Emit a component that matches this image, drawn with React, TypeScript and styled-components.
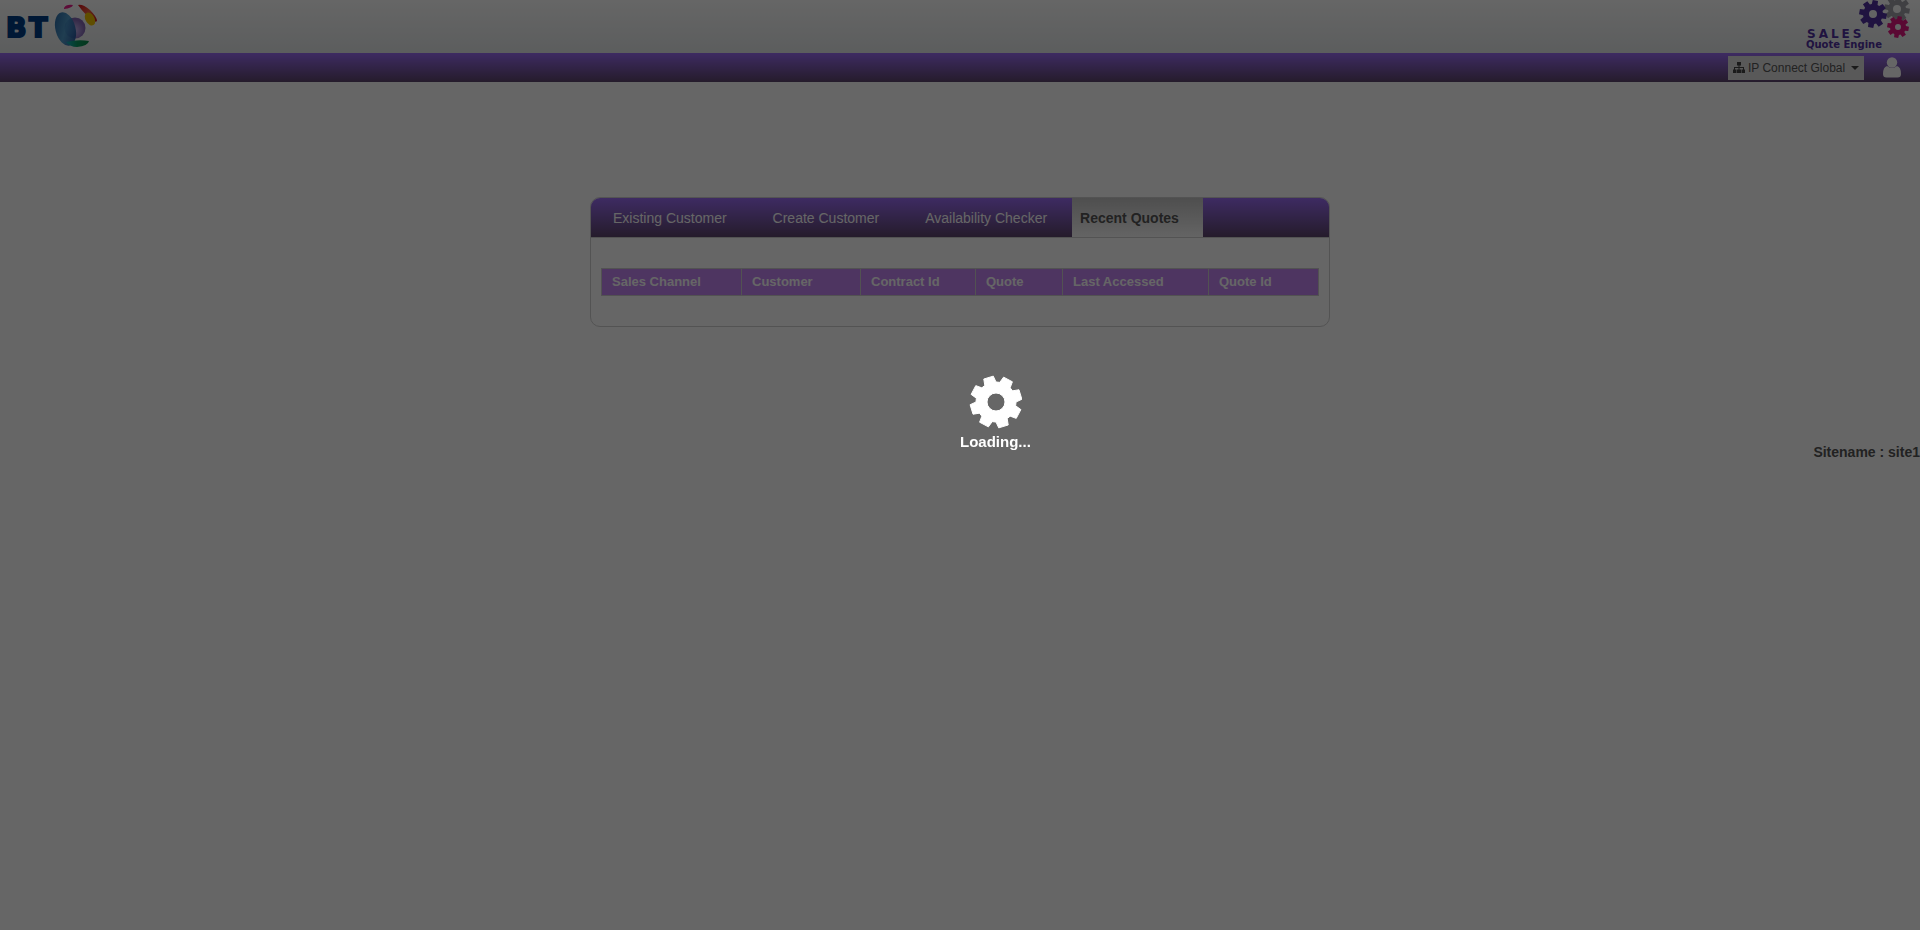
import React from "react";
import styled, { createGlobalStyle } from "styled-components";

const GlobalStyle = createGlobalStyle`
  body { margin: 0; background: #fff; font-family: "Liberation Sans", Arial, sans-serif; }
  * { box-sizing: border-box; }
`;

const purple = "linear-gradient(#9b6cf5, #5d466d)";

const Page = styled.div`
  min-height: 100vh;
`;
const Header = styled.header`
  display: flex;
  justify-content: space-between;
  height: 53px;
  padding: 0 8px 0 6px;
  background: linear-gradient(#ffffff, #e5e9ea);
`;
const NavBar = styled.nav`
  display: flex;
  align-items: center;
  justify-content: flex-end;
  gap: 19px;
  height: 29px;
  padding-right: 19px;
  background: ${purple};
`;
const ProductPicker = styled.label`
  display: flex;
  align-items: center;
  gap: 3px;
  height: 24px;
  padding: 0 5px;
  background: #dedede;
`;
const ProductSelect = styled.select`
  appearance: none;
  border: 0;
  padding: 0;
  margin: 0 2px 0 0;
  background: transparent;
  color: #555;
  font: 12px/22px "Liberation Sans", Arial, sans-serif;
`;
const UserButton = styled.button`
  display: flex;
  border: 0;
  padding: 0;
  background: none;
`;
const Panel = styled.main`
  width: 740px;
  max-width: 100%;
  margin: 115px auto 0;
  border: 1px solid #d0d0d0;
  border-radius: 10px;
  overflow: hidden;
`;
const Tabs = styled.div`
  display: flex;
  height: 40px;
  border-bottom: 1px solid #d0d0d0;
  background: ${purple};
`;
const Tab = styled.button<{ $active?: boolean }>`
  border: 0;
  padding: ${(p) => (p.$active ? "2px 24px 0 8px" : "2px 24px 0 22px")};
  margin-left: ${(p) => (p.$active ? "1px" : "0")};
  background: ${(p) => (p.$active ? "linear-gradient(#c4c4c4, #fafafa)" : "none")};
  color: ${(p) => (p.$active ? "#555" : "#fff")};
  font: ${(p) => (p.$active ? "bold" : "normal")} 14px/37px "Liberation Sans", Arial, sans-serif;
`;
const QuotesTable = styled.table`
  width: calc(100% - 21px);
  margin: 30px 11px 30px 10px;
  border-collapse: collapse;
  table-layout: fixed;
`;
const HeadCell = styled.th<{ $width: number }>`
  width: ${(p) => p.$width}px;
  border: 1px solid #ccc;
  padding: 0 10px;
  background: #c385f3;
  color: #fff;
  text-align: left;
  font-size: 13px;
  line-height: 26px;
`;
const SiteName = styled.footer`
  margin-top: 116px;
  text-align: right;
  font-size: 14px;
  font-weight: bold;
  line-height: 18px;
  color: #555;
`;
const Overlay = styled.div`
  position: fixed;
  inset: 0;
  background: rgba(0, 0, 0, 0.6);
`;
const Loader = styled.div`
  position: absolute;
  left: 50%;
  top: 375px;
  display: flex;
  flex-direction: column;
  align-items: center;
  color: #fff;
  font-size: 15px;
  font-weight: bold;
  line-height: 26px;
`;

function gearPath(cx: number, cy: number, outer: number, inner: number, hole: number, start: number) {
  const points: string[] = [];
  for (let i = 0; i < 8; i++) {
    const mid = start + i * 45;
    const corners: [number, number][] = [[-17, inner], [-11, outer], [11, outer], [17, inner]];
    for (const [offset, radius] of corners) {
      const a = ((mid + offset) * Math.PI) / 180;
      points.push(`${(cx + radius * Math.cos(a)).toFixed(2)} ${(cy + radius * Math.sin(a)).toFixed(2)}`);
    }
  }
  return `M${points.join("L")}ZM${cx - hole} ${cy}a${hole} ${hole} 0 1 0 ${hole * 2} 0a${hole} ${hole} 0 1 0 ${-hole * 2} 0Z`;
}

function BtLogo() {
  return (
    <svg width="94" height="50" viewBox="6 0 94 50" role="img" aria-label="BT">
      <defs>
        <radialGradient id="globe" cx="45%" cy="60%">
          <stop offset="0" stopColor="#c8b8f0" />
          <stop offset="1" stopColor="#8468b4" />
        </radialGradient>
        <linearGradient id="blue" x1="0" y1="0" x2="1" y2="1">
          <stop offset="0" stopColor="#0d4f96" />
          <stop offset="0.5" stopColor="#3f92c6" />
          <stop offset="1" stopColor="#123a8c" />
        </linearGradient>
        <linearGradient id="green">
          <stop offset="0" stopColor="#18b0c8" />
          <stop offset="0.5" stopColor="#0a9a60" />
          <stop offset="1" stopColor="#0a8a4a" />
        </linearGradient>
        <linearGradient id="red" x1="0" y1="0" x2="1" y2="1">
          <stop offset="0" stopColor="#d8101c" />
          <stop offset="0.5" stopColor="#f06040" />
          <stop offset="1" stopColor="#c80c18" />
        </linearGradient>
      </defs>
      <text x="6 29" y="37" fontFamily="DejaVu Sans" fontWeight="bold" fontSize="27" fill="#003c84" stroke="#003c84" strokeWidth="2">BT</text>
      <circle cx="75" cy="28" r="10.500" fill="url(#globe)" />
      <ellipse cx="65.500" cy="29" rx="10" ry="17" transform="rotate(-15 65.500 29)" fill="url(#blue)" opacity="0.900" />
      <path d="M66 42Q78 39 89 41Q88 46 77 47Q70 47 66 42Z" fill="url(#green)" />
      <path d="M64 8Q66 4 73 5Q72 8 64 9Z" fill="#e8208c" />
      <path d="M78 5Q83 4 90 10Q97 17 97 21Q95 23 92 19Q85 15 78 5Z" fill="url(#red)" />
      <ellipse cx="90" cy="19" rx="4.500" ry="7" transform="rotate(-30 90 19)" fill="#f0c400" />
    </svg>
  );
}

function SalesLogo() {
  return (
    <svg width="108" height="52" viewBox="1804 0 108 52" role="img" aria-label="Sales Quote Engine">
      <path fillRule="evenodd" d={gearPath(1897, 9, 13, 9, 4, 10)} fill="#a0a0a8" />
      <path fillRule="evenodd" d={gearPath(1873, 14, 14, 10, 4, 10)} fill="#5030a0" />
      <path fillRule="evenodd" d={gearPath(1898, 27, 11, 8, 3, 10)} fill="#e01880" />
      <g fill="#5030a0" fontFamily="DejaVu Sans" fontWeight="bold">
        <text x="1807" y="38" fontSize="12" letterSpacing="3">SALES</text>
        <text x="1806" y="48" fontSize="10">Quote Engine</text>
      </g>
    </svg>
  );
}

const columns: [string, number][] = [
  ["Sales Channel", 140],
  ["Customer", 119],
  ["Contract Id", 115],
  ["Quote", 87],
  ["Last Accessed", 146],
  ["Quote Id", 110],
];

export default function App() {
  return (
    <Page>
      <GlobalStyle />
      <Header>
        <BtLogo />
        <SalesLogo />
      </Header>
      <NavBar>
        <ProductPicker>
          <svg width="12" height="11" viewBox="0 0 12 11" fill="#444" aria-hidden="true">
            <path d="M4 0h4v3.500H6.500V5H11v2.500h1V11H8.500V7.500H10V6H6.500v1.500H8V11H4V7.500h1.500V6H2v1.500h1.500V11H0V7.500h1V5h4.500V3.500H4z" />
          </svg>
          <ProductSelect aria-label="Product">
            <option>IP Connect Global</option>
          </ProductSelect>
          <svg width="8" height="4" viewBox="0 0 8 4" fill="#444" aria-hidden="true"><path d="M0 0h8L4 4z" /></svg>
        </ProductPicker>
        <UserButton aria-label="Account">
          <svg width="18" height="21" viewBox="0 0 18 21" fill="#fff" aria-hidden="true">
            <circle cx="9" cy="5.500" r="5.200" />
            <path d="M4 9Q9 13 14 9Q18 10 18 17Q18 20.500 14.500 20.500H3.500Q0 20.500 0 17Q0 10 4 9Z" />
          </svg>
        </UserButton>
      </NavBar>
      <Panel>
        <Tabs role="tablist">
          <Tab role="tab">Existing Customer</Tab>
          <Tab role="tab">Create Customer</Tab>
          <Tab role="tab">Availability Checker</Tab>
          <Tab role="tab" aria-selected="true" $active>Recent Quotes</Tab>
        </Tabs>
        <QuotesTable>
          <thead>
            <tr>
              {columns.map(([name, width]) => (
                <HeadCell key={name} $width={width}>{name}</HeadCell>
              ))}
            </tr>
          </thead>
        </QuotesTable>
      </Panel>
      <SiteName>Sitename : site1</SiteName>
      <Overlay>
        <Loader role="status">
          <svg width="54" height="54" viewBox="0 0 54 54" fill="#fff" aria-hidden="true">
            <path fillRule="evenodd" d={gearPath(28, 27, 26, 20, 9, -107)} stroke="#fff" strokeLinejoin="round" />
          </svg>
          Loading...
        </Loader>
      </Overlay>
    </Page>
  );
}
